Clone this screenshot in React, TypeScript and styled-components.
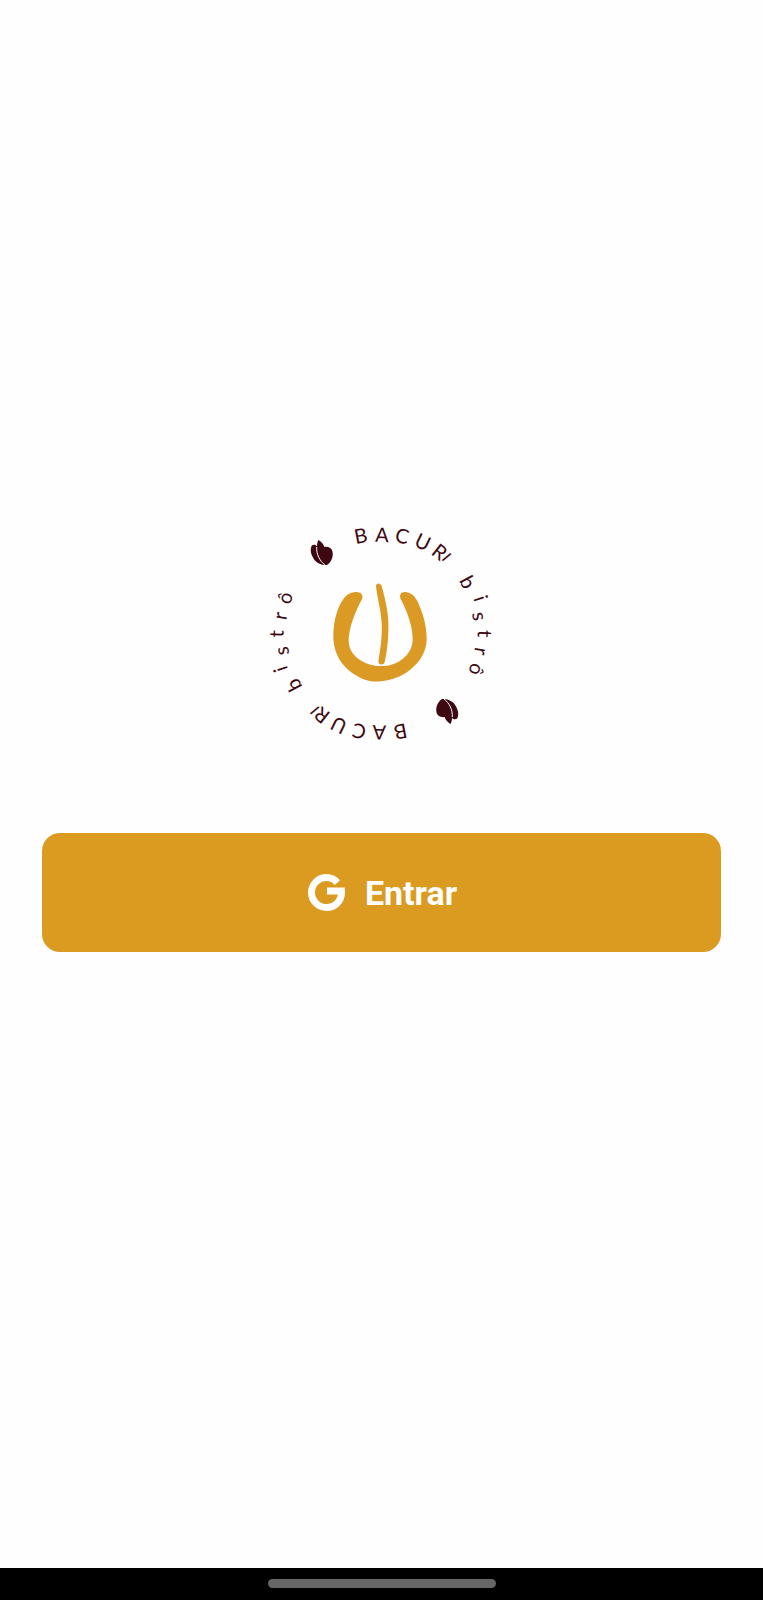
import React from 'react';
import styled, { createGlobalStyle } from 'styled-components';

const GlobalStyle = createGlobalStyle`
  html, body {
    margin: 0;
    padding: 0;
    background: #fefefe;
  }
`;

// letters of the ring: x, y, rotation, in the logo's viewBox
const ringLetters = [
  { c: 'B', x: 332, y: 75, r: -11 },
  { c: 'A', x: 396, y: 72, r: 2 },
  { c: 'C', x: 457, y: 76, r: 13 },
  { c: 'U', x: 519, y: 94, r: 26 },
  { c: 'R', x: 570, y: 124, r: 38 },
  { c: 'I', x: 591, y: 140, r: 50, small: true },
  { c: 'b', x: 655, y: 215, r: 62 },
  { c: 'i', x: 695, y: 264, r: 72 },
  { c: 's', x: 692, y: 318, r: 81 },
  { c: 't', x: 707, y: 371, r: 91 },
  { c: 'r', x: 697, y: 425, r: 101 },
  { c: 'ô', x: 682, y: 480, r: 111 },
];

const Leaf = () => (
  <>
    <path
      d="M-10 -37 C0 -32 6 -24 8 -16 C20 -18 30 -12 32 -4 C36 12 30 28 16 38 C0 40 -20 32 -28 12 C-34 0 -34 -12 -30 -20 C-26 -24 -18 -24 -14 -18 C-14 -26 -12 -32 -10 -37 Z"
      fill="#3d0812"
    />
    <path d="M-15 -16 C-16 6 -6 26 10 38" fill="none" stroke="#fefefe" strokeWidth="3" />
  </>
);

const LogoMark = () => (
  <LogoSvg viewBox="0 0 789 720" aria-label="Bacuri bistrô">
    {ringLetters.map((l, i) => (
      <RingLetter key={i} $small={l.small} textAnchor="middle" dominantBaseline="central" transform={`translate(${l.x} ${l.y}) rotate(${l.r})`}>
        {l.c}
      </RingLetter>
    ))}
    {ringLetters.map((l, i) => (
      <RingLetter key={`b${i}`} $small={l.small} textAnchor="middle" dominantBaseline="central" transform={`translate(${784 - l.x} ${742 - l.y}) rotate(${l.r + 180})`}>
        {l.c}
      </RingLetter>
    ))}
    <g transform="translate(215 127)"><Leaf /></g>
    <g transform="translate(592 605) rotate(180)"><Leaf /></g>
    <g transform="translate(225 193) scale(1 1.06)" fill="#db9a24">
      <path d="M58 66 C70 52 92 46 105 52 C114 57 114 66 110 72 C90 108 72 150 71 186 C70 215 90 238 120 250 C140 258 165 262 190 258 C225 252 262 225 263 186 C264 150 248 108 228 72 C222 60 226 50 240 50 C256 50 268 60 276 74 C294 108 305 145 305 182 C305 235 260 275 215 292 C190 302 150 308 120 298 C70 280 25 240 25 175 C25 130 38 90 58 66 Z" />
    </g>
    <g transform="translate(225 195) scale(1 1.03)" fill="#db9a24">
      <path d="M153 32 C153 22 167 22 170 32 C182 75 193 120 190 165 C189 195 185 230 179 254 C176 263 160 263 160 252 C166 215 172 185 170 140 C168 100 156 65 153 32 Z" />
    </g>
  </LogoSvg>
);

const GoogleMark = () => (
  <GoogleSvg viewBox="0 0 37 37" aria-hidden="true">
    <path
      d="M29.4 8.6 C26.6 5.4 22.8 3.5 18.6 3.5 C10.2 3.5 3.5 10.2 3.5 18.5 C3.5 26.8 10.2 33.5 18.6 33.5 C27 33.5 33.5 27 33.5 18.6 L33.4 17 L19 17"
      fill="none"
      stroke="#fefefe"
      strokeWidth="7"
    />
  </GoogleSvg>
);

const App: React.FC = () => {
  return (
    <Page>
      <GlobalStyle />
      <Main>
        <LogoMark />
        <LoginButton type="button">
          <GoogleMark />
          <ButtonLabel>Entrar</ButtonLabel>
        </LoginButton>
      </Main>
      <NavBar>
        <HomePill />
      </NavBar>
    </Page>
  );
};

const Page = styled.div`
  width: 763px;
  height: 1600px;
  display: flex;
  flex-direction: column;
  background: #fefefe;
`;

const Main = styled.main`
  flex: 1;
  display: flex;
  flex-direction: column;
  align-items: center;
  padding-top: 510px;
`;

const LogoSvg = styled.svg`
  display: block;
  width: 263px;
  height: 240px;
`;

const RingLetter = styled.text<{ $small?: boolean }>`
  font-family: 'Lato', 'Liberation Sans', sans-serif;
  font-size: ${(p) => (p.$small ? '46px' : '60px')};
  font-weight: 400;
  fill: #3d0812;
`;

const LoginButton = styled.button`
  width: 679px;
  height: 119px;
  margin-top: 83px;
  padding: 0 0 0 2px;
  border: none;
  border-radius: 18px;
  background: #db9a20;
  display: flex;
  align-items: center;
  justify-content: center;
  gap: 20px;
  cursor: pointer;
`;

const GoogleSvg = styled.svg`
  display: block;
  width: 37px;
  height: 37px;
`;

const ButtonLabel = styled.span`
  color: #fefefe;
  font-family: 'Roboto', 'Liberation Sans', sans-serif;
  font-size: 34px;
  font-weight: 700;
  line-height: 40px;
`;

const NavBar = styled.div`
  height: 32px;
  background: #000;
  display: flex;
  align-items: center;
  justify-content: center;
  padding-bottom: 2px;
  box-sizing: border-box;
`;

const HomePill = styled.div`
  width: 228px;
  height: 9px;
  border-radius: 5px;
  background: #666;
`;

export default App;
